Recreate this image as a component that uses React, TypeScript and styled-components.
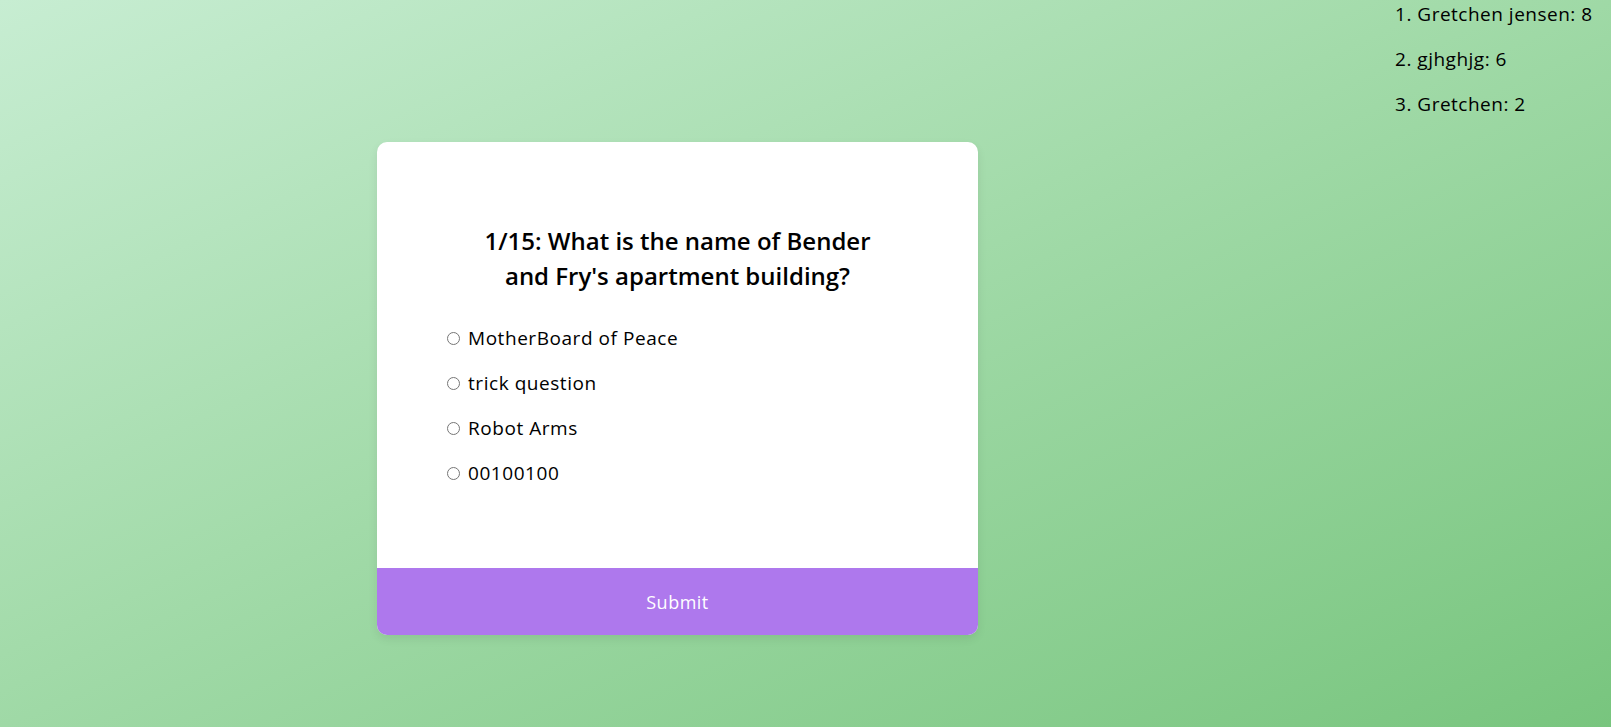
import React from "react";
import styled, { createGlobalStyle } from "styled-components";

const Global = createGlobalStyle`
  html, body { margin: 0; padding: 0; height: 100%; }
  body {
    font-family: "Open Sans", "Liberation Sans", sans-serif;
    color: #000;
    background: linear-gradient(to bottom right, #c7edd2 0%, #a3dbaa 45%, #78c57e 100%);
    min-height: 727px;
  }
  #root { min-height: 100%; }
`;

const Page = styled.div`
  display: flex;
  min-height: 727px;
`;

const Main = styled.main`
  flex: 1;
  display: flex;
  justify-content: center;
  align-items: flex-start;
  padding: 142px 40px 0 0;
`;

const Card = styled.div`
  width: 601px;
  height: 493px;
  background: #fff;
  border-radius: 10px;
  overflow: hidden;
  display: flex;
  flex-direction: column;
  box-shadow: 0 4px 10px rgba(0, 0, 0, 0.08);
`;

const Body = styled.div`
  flex: 1;
  padding: 81px 65px 0;
`;

const Question = styled.h2`
  margin: 0 auto;
  max-width: 412px;
  text-align: center;
  font-size: 24px;
  font-weight: 600;
  line-height: 35px;
`;

const Options = styled.div`
  margin-top: 32px;
  display: flex;
  flex-direction: column;
  gap: 18px;
`;

const Option = styled.label`
  display: flex;
  align-items: center;
  font-size: 19px;
  letter-spacing: 0.55px;
  line-height: 27px;
  cursor: pointer;

  input {
    margin: 0 8px 0 5px;
    width: 13px;
    height: 13px;
  }
`;

const Submit = styled.button`
  height: 67px;
  border: none;
  background: #ae78ed;
  color: #fff;
  font-family: inherit;
  font-size: 18px;
  letter-spacing: 0.5px;
  cursor: pointer;
`;

const Aside = styled.aside`
  width: 216px;
  padding-top: 1px;
  display: flex;
  flex-direction: column;
  gap: 18px;
`;

const Entry = styled.p`
  margin: 0;
  font-size: 19px;
  letter-spacing: 0.5px;
  line-height: 27px;
`;

const options = ["MotherBoard of Peace", "trick question", "Robot Arms", "00100100"];
const leaders = [
  ["Gretchen jensen", 8],
  ["gjhghjg", 6],
  ["Gretchen", 2],
];

export default function App() {
  return (
    <>
      <Global />
      <Page>
        <Main>
          <Card>
            <Body>
              <Question>1/15: What is the name of Bender and Fry's apartment building?</Question>
              <Options>
                {options.map((o) => (
                  <Option key={o}>
                    <input type="radio" name="answer" value={o} />
                    {o}
                  </Option>
                ))}
              </Options>
            </Body>
            <Submit>Submit</Submit>
          </Card>
        </Main>
        <Aside>
          {leaders.map(([n, s], i) => (
            <Entry key={String(n)}>
              {i + 1}. {n}: {s}
            </Entry>
          ))}
        </Aside>
      </Page>
    </>
  );
}
